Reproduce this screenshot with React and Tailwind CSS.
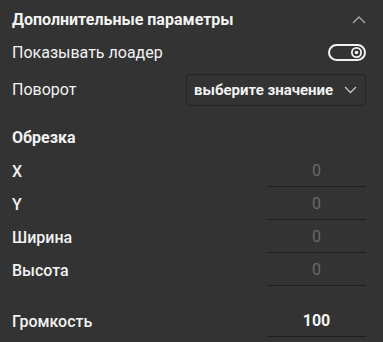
import React from 'react';

const ChevronUp = () => (
  <svg width="14" height="8" viewBox="0 0 14 8" fill="none">
    <path d="M1 7L7 1L13 7" stroke="#a8a8a8" strokeWidth="1.3" />
  </svg>
);

const ChevronDown = () => (
  <svg width="13" height="8" viewBox="0 0 13 8" fill="none">
    <path d="M1 1L6.5 6.5L12 1" stroke="#c8c8c8" strokeWidth="1.3" />
  </svg>
);

const Toggle = () => (
  <svg width="38" height="17" viewBox="0 0 38 17" fill="none">
    <rect x="1" y="1" width="36" height="15" rx="7.5" stroke="#f2f2f2" strokeWidth="2" />
    <circle cx="28.5" cy="8.5" r="4.6" stroke="#f2f2f2" strokeWidth="1.8" />
    <circle cx="28.5" cy="8.5" r="1.8" fill="#f2f2f2" />
  </svg>
);

const NumberRow = ({ label, value, active }) => (
  <div className="flex h-[33px] items-stretch justify-between">
    <span className="flex items-center pt-[2px] font-medium">{label}</span>
    <div
      className={`flex w-[99px] items-center justify-center border-b border-[#1f1f1f] pt-[2px] ${
        active ? 'font-bold text-[#f2f2f2]' : 'text-[#6a6a6a]'
      }`}
    >
      {value}
    </div>
  </div>
);

export default function App() {
  return (
    <div
      className="h-[342px] w-[383px] bg-[#333333] pl-[12px] pr-[17px] text-[16px] text-[#f2f2f2]"
      style={{ fontFamily: 'Roboto, "Noto Sans", sans-serif' }}
    >
      <div className="flex h-[39px] items-center justify-between pt-[1px]">
        <span className="font-bold">Дополнительные параметры</span>
        <ChevronUp />
      </div>

      <div className="flex h-[27px] items-center justify-between">
        <span>Показывать лоадер</span>
        <Toggle />
      </div>

      <div className="flex h-[48px] items-center justify-between">
        <span>Поворот</span>
        <div className="flex h-[32px] w-[180px] items-center justify-between rounded-[4px] border border-[#242424] pl-[7px] pr-[8px]">
          <span className="whitespace-nowrap text-[15px] font-bold">выберите значение</span>
          <ChevronDown />
        </div>
      </div>

      <div className="flex h-[40px] items-center pt-[8px]">
        <span className="font-bold">Обрезка</span>
      </div>

      <NumberRow label="X" value="0" />
      <NumberRow label="Y" value="0" />
      <NumberRow label="Ширина" value="0" />
      <NumberRow label="Высота" value="0" />

      <div className="h-[18px]" />
      <NumberRow label="Громкость" value="100" active />
    </div>
  );
}
